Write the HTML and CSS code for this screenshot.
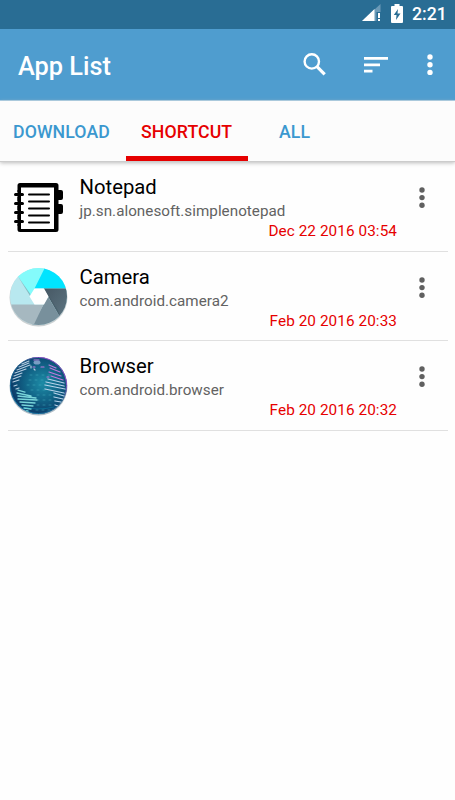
FILE: index.html
```html
<!DOCTYPE html>
<html lang="en">
<head>
<meta charset="utf-8">
<title>App List</title>
<link rel="stylesheet" href="styles.css">
</head>
<body>
<div class="status">
  <svg class="signal" width="20" height="18" viewBox="0 0 20 18"><path d="M18.500 0V8H14.500V17H0Z" fill="#6c9ab7"/><path d="M0 17L12.500 5V17Z" fill="#fff"/><path d="M16 9h2v5h-2zM16 15h2v2h-2z" fill="#fff"/></svg>
  <svg class="battery" width="12" height="19" viewBox="0 0 12 19"><path d="M3.500 0h5v2H11q1 0 1 1v15q0 1-1 1H1q-1 0-1-1V3q0-1 1-1h2.500z" fill="#fff"/><path d="M7 5L2.800 11H5.500L5 16L9.500 9.500H6.500Z" fill="#296d94"/></svg>
  <span class="clock">2:21</span>
</div>
<header class="toolbar">
  <h1>App List</h1>
  <svg class="search" width="24" height="24" viewBox="0 0 24 24" fill="none" stroke="#fff"><circle cx="8.800" cy="8.400" r="7.200" stroke-width="2.400"/><path d="M14 13.700L21.700 21.300" stroke-width="3.200"/></svg>
  <svg class="sort" width="24" height="17" viewBox="0 0 24 17" fill="#fff"><path d="M0 0h24v2.700H0zM0 6.500h16v2.700H0zM0 12.800h8.500v2.700H0z"/></svg>
  <svg class="more" width="6" height="22" viewBox="0 0 6 22" fill="#fff"><circle cx="3" cy="3" r="2.700"/><circle cx="3" cy="10.700" r="2.700"/><circle cx="3" cy="18.400" r="2.700"/></svg>
</header>
<nav class="tabs">
  <span class="tab download">DOWNLOAD</span>
  <span class="tab active">SHORTCUT</span>
  <span class="tab all">ALL</span>
</nav>
<main class="list">
  <article class="row">
    <svg class="icon" width="60" height="62" viewBox="8 178 60 62"><path fill="#000" d="M20 183h36q2.500 0 2.500 2.500V190H61q2 0 2 2v6q0 2-2 2h-2.500v4H61q2 0 2 2v6q0 2-2 2h-2.500v15.500q0 2.500-2.500 2.500H20q-2.500 0-2.500-2.500v-44q0-2.500 2.500-2.500z"/><path fill="#fff" d="M21 187.500h33V229H21z"/><path d="M15.500 194.500h7M15.500 203.500h7M15.500 212.500h7M15.500 221.500h7" stroke="#fff" stroke-width="5"/><path d="M17.500 190v36h3.500v-36z"/><path d="M15.500 194.500h7M15.500 203.500h7M15.500 212.500h7M15.500 221.500h7" stroke="#000" stroke-width="3" stroke-linecap="round"/><path d="M29 194.500h20M29 201.500h20M29 208.500h20M29 215.500h20M29 222.500h20" stroke="#000" stroke-width="2" stroke-linecap="round"/></svg>
    <div class="details"><h2>Notepad</h2><p>jp.sn.alonesoft.simplenotepad</p><time>Dec 22 2016 03:54</time></div>
    <svg class="menu" width="6" height="22" viewBox="0 0 6 22" fill="#606060"><circle cx="3" cy="3" r="2.700"/><circle cx="3" cy="10.600" r="2.700"/><circle cx="3" cy="18.200" r="2.700"/></svg>
  </article>
  <article class="row">
    <svg class="icon" width="60" height="62" viewBox="8 267.500 60 62">
      <defs><clipPath id="lens"><circle cx="38.500" cy="296" r="28.500"/></clipPath><linearGradient id="dark" x1="0" x2="1" y1="0" y2="1"><stop stop-color="#465864"/><stop offset="1" stop-color="#607885"/></linearGradient></defs>
      <circle cx="38.500" cy="297" r="29" fill="#cbd0d2"/>
      <g clip-path="url(#lens)"><path d="M8 265h60v64H8z" fill="#b8e8ef"/><path d="M15 271L31 295.500L47 265H15z" fill="#84fbfb"/><path d="M46 265L34.500 288H70V265z" fill="#00e4ff"/><path d="M43.500 288H70v32L59.500 316z" fill="url(#dark)"/><path d="M48 296L60 316.500L50 328H30L43.500 304z" fill="#78909c"/><path d="M8 304H43.500L32 328H8z" fill="#a6b8c0"/><path d="M18 276L31 297L30 293zM44 288L60 316L58 310z" fill="#31515b" opacity=".3"/></g>
      <path d="M34.500 288h9.500l4.500 8l-4.500 8h-9.500l-5-8z" fill="#fff"/>
    </svg>
    <div class="details"><h2>Camera</h2><p>com.android.camera2</p><time>Feb 20 2016 20:33</time></div>
    <svg class="menu" width="6" height="22" viewBox="0 0 6 22" fill="#606060"><circle cx="3" cy="3" r="2.700"/><circle cx="3" cy="10.600" r="2.700"/><circle cx="3" cy="18.200" r="2.700"/></svg>
  </article>
  <article class="row">
    <svg class="icon" width="60" height="62" viewBox="8 356 60 62">
      <defs><clipPath id="globe"><circle cx="38.500" cy="384.500" r="28.500"/></clipPath><radialGradient id="sea" cx=".57" cy=".46" r=".56"><stop stop-color="#1d8ba6"/><stop offset=".55" stop-color="#116386"/><stop offset="1" stop-color="#0b3b68"/></radialGradient><linearGradient id="rim" x1="0" y1="1" x2="1" y2="0"><stop stop-color="#0a86b8"/><stop offset=".6" stop-color="#336996"/><stop offset=".8" stop-color="#b54adf"/><stop offset="1" stop-color="#7041b4"/></linearGradient></defs>
      <circle cx="38.500" cy="385.500" r="29" fill="#aebcc5"/>
      <circle cx="38.500" cy="384.500" r="28.500" fill="url(#sea)"/>
      <circle cx="38.500" cy="384.500" r="28.100" fill="none" stroke="url(#rim)" stroke-width=".8"/>
      <g clip-path="url(#globe)" fill="none" stroke-linecap="round">
        <path d="M30 374h21M29 379h17M27 384h17M31 389h14M37 394h14M37 399h14M37 404h16M36 409h16" stroke="#4cb5c6" stroke-width="1" stroke-dasharray="2 4" opacity=".45"/>
        <path d="M22 363l7-3M19 366l10-4M17 369l13-5M15 372l11-4M14 375l8-3M13 378l8-3M13 381l6-2M14 385l3-1M16 388l3-1M31 365v2M34 368l1 1" stroke="#b3cce0" stroke-width="1.200"/>
        <path d="M18 389l7 2M17 392l14 3M18 395l18 2M18 398l19 1M20 401l15 1M22 404l11 1M24 407l7 1M26 410l2 0" stroke="#79d5d9" stroke-width="1.300"/>
        <path d="M34 359h5M33 366h2M41 366h3M49 364l7 3M50 367l10 4M49 371l12 4M51 375l12 4M47 376l2 0" stroke="#c178dd" stroke-width="1.200"/>
        <path d="M48 378l16 4M46 381l18 4M45 384l20 4M45 388l19 4M54 392l10 3M54 396l9 2M55 400l6 1M55 404l3 1" stroke="#b7d3eb" stroke-width="1.250"/>
        <ellipse cx="37" cy="361.500" rx="3.500" ry="2" fill="#799dc3" stroke="none"/>
        <path d="M23 406q15 4 31 0" stroke="#09b0d0" opacity=".3"/>
      </g>
    </svg>
    <div class="details"><h2>Browser</h2><p>com.android.browser</p><time>Feb 20 2016 20:32</time></div>
    <svg class="menu" width="6" height="22" viewBox="0 0 6 22" fill="#606060"><circle cx="3" cy="3" r="2.700"/><circle cx="3" cy="10.600" r="2.700"/><circle cx="3" cy="18.200" r="2.700"/></svg>
  </article>
</main>
</body>
</html>
```
FILE: styles.css
```css
* { box-sizing: border-box; }
body { margin: 0; height: 800px; background: #fefefe; font-family: Roboto, sans-serif; overflow: hidden; }
h1, h2, p { margin: 0; }
svg { display: block; flex-shrink: 0; }
.status { height: 29px; background: #296d94; display: flex; align-items: flex-start; justify-content: flex-end; padding: 4px 7px 0 0; color: #fff; }
.signal { margin-right: 9px; }
.clock { width: 36px; margin-left: 9px; font-size: 17.700px; line-height: 20px; font-weight: 500; white-space: nowrap; }
.toolbar { height: 72px; background: #4f9dcf; border-bottom: 1px solid #a5cde7; display: flex; color: #fff; padding-left: 18px; }
h1 { width: 285px; font-size: 25.300px; line-height: 30px; font-weight: 500; padding-top: 23px; letter-spacing: 0; white-space: nowrap; }
.search { margin-top: 24px; }
.sort { margin: 28px 0 0 37px; }
.more { margin: 25px 0 0 39px; }
.tabs { height: 61px; display: flex; background: #fcfcfc; border-bottom: 1px solid #ccc; box-shadow: 0 1px 4px #bbb; }
.tab { height: 60px; padding-top: 20px; font-size: 17.700px; line-height: 22px; font-weight: 500; letter-spacing: .1px; color: #3b98cf; white-space: nowrap; }
.download { width: 126px; padding-left: 13px; }
.active { width: 122px; padding-left: 15px; color: #e60000; border-bottom: 5px solid #e60000; }
.all { padding-left: 31px; }
.list { padding: 0 7px 0 8px; }
.row { height: 89.500px; border-bottom: 1px solid #e0e0e0; display: flex; }
.icon { margin-top: 16px; }
.details { width: 329px; padding: 12px 0 0 11.500px; display: flex; flex-direction: column; }
h2 { height: 26px; font-size: 20.300px; line-height: 26px; font-weight: 400; color: #000; }
p { height: 21px; font-size: 15.200px; line-height: 22px; letter-spacing: .04px; color: #626262; }
time { height: 21px; font-size: 15.300px; line-height: 21px; letter-spacing: .08px; color: #e60000; align-self: flex-end; }
.menu { margin: 25px 0 0 22px; }
```
